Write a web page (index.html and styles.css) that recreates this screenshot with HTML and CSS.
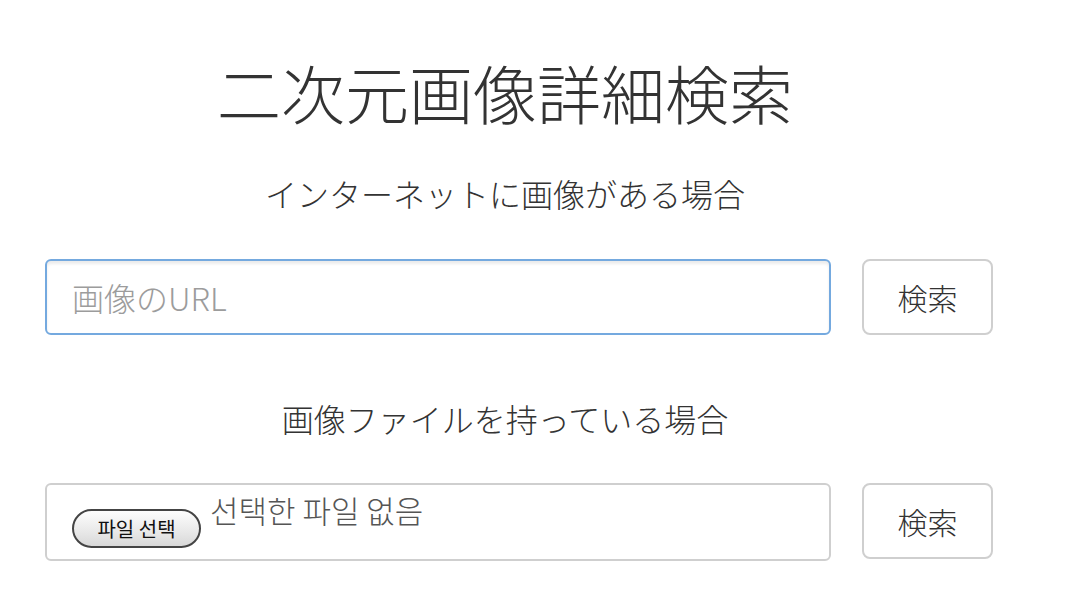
FILE: index.html
```html
<!DOCTYPE html>
<html lang="ja">
<head>
<meta charset="utf-8">
<title>二次元画像詳細検索</title>
<link rel="stylesheet" href="styles.css">
</head>
<body>
<main class="page">
  <h1 class="title">二次元画像詳細検索</h1>
  <h2 class="section-label">インターネットに画像がある場合</h2>
  <form class="row row-url">
    <input class="url-input" type="text" placeholder="画像のURL">
    <button class="search-btn" type="button">検索</button>
  </form>
  <h2 class="section-label label-file">画像ファイルを持っている場合</h2>
  <form class="row row-file">
    <div class="file-box">
      <span class="file-btn">파일 선택</span>
      <span class="file-name">선택한 파일 없음</span>
    </div>
    <button class="search-btn" type="button">検索</button>
  </form>
</main>
</body>
</html>
```
FILE: styles.css
```css
html, body {
  margin: 0;
  padding: 0;
  background: #fff;
}
body {
  font-family: "Noto Sans CJK JP", "Noto Sans", sans-serif;
  color: #333;
}
.page {
  width: 948px;
  padding-left: 45px;
  display: flex;
  flex-direction: column;
}
.title {
  width: 920px;
  margin: 53px 0 0 0;
  font-size: 64px;
  font-weight: 300;
  line-height: 77px;
  text-align: center;
  color: #333;
}
.section-label {
  width: 920px;
  margin: 44px 0 0 0;
  font-size: 32px;
  font-weight: 300;
  line-height: 38px;
  text-align: center;
  color: #333;
}
.label-file {
  margin-top: 64px;
}
.row {
  display: flex;
  gap: 31px;
  margin: 47px 0 0 0;
}
.row-file {
  margin-top: 46px;
}
.url-input {
  box-sizing: border-box;
  width: 786px;
  height: 76px;
  border: 2px solid #74a9df;
  border-radius: 6px;
  padding: 0 25px;
  font-family: "Noto Sans CJK JP", "Noto Sans", sans-serif;
  font-weight: 300;
  font-size: 32px;
  color: #333;
  outline: none;
  box-shadow: inset 0 3px 3px rgba(0,0,0,0.08);
}
.url-input::placeholder {
  color: #9c9c9c;
}
.search-btn {
  box-sizing: border-box;
  width: 131px;
  height: 76px;
  border: 2px solid #cfcfcf;
  border-radius: 8px;
  background: #fff;
  font-family: "Noto Sans CJK JP", "Noto Sans", sans-serif;
  font-weight: 300;
  font-size: 30px;
  color: #333;
  padding: 0;
}
.file-box {
  box-sizing: border-box;
  width: 786px;
  height: 78px;
  border: 2px solid #cfcfcf;
  border-radius: 6px;
  display: flex;
  align-items: flex-start;
  padding: 0 0 0 25px;
}
.file-btn {
  box-sizing: border-box;
  margin-top: 24px;
  width: 129px;
  height: 39px;
  border: 2px solid #444;
  border-radius: 20px;
  background: linear-gradient(#fdfdfd, #e8e8e8 60%, #d8d8d8);
  font-family: "Noto Sans CJK KR", sans-serif;
  font-size: 20px;
  line-height: 35px;
  text-align: center;
  color: #111;
}
.file-name {
  margin: 3px 0 0 9px;
  font-family: "Noto Sans CJK KR", sans-serif;
  font-weight: 300;
  font-size: 31px;
  line-height: 44px;
  color: #555;
}
```
